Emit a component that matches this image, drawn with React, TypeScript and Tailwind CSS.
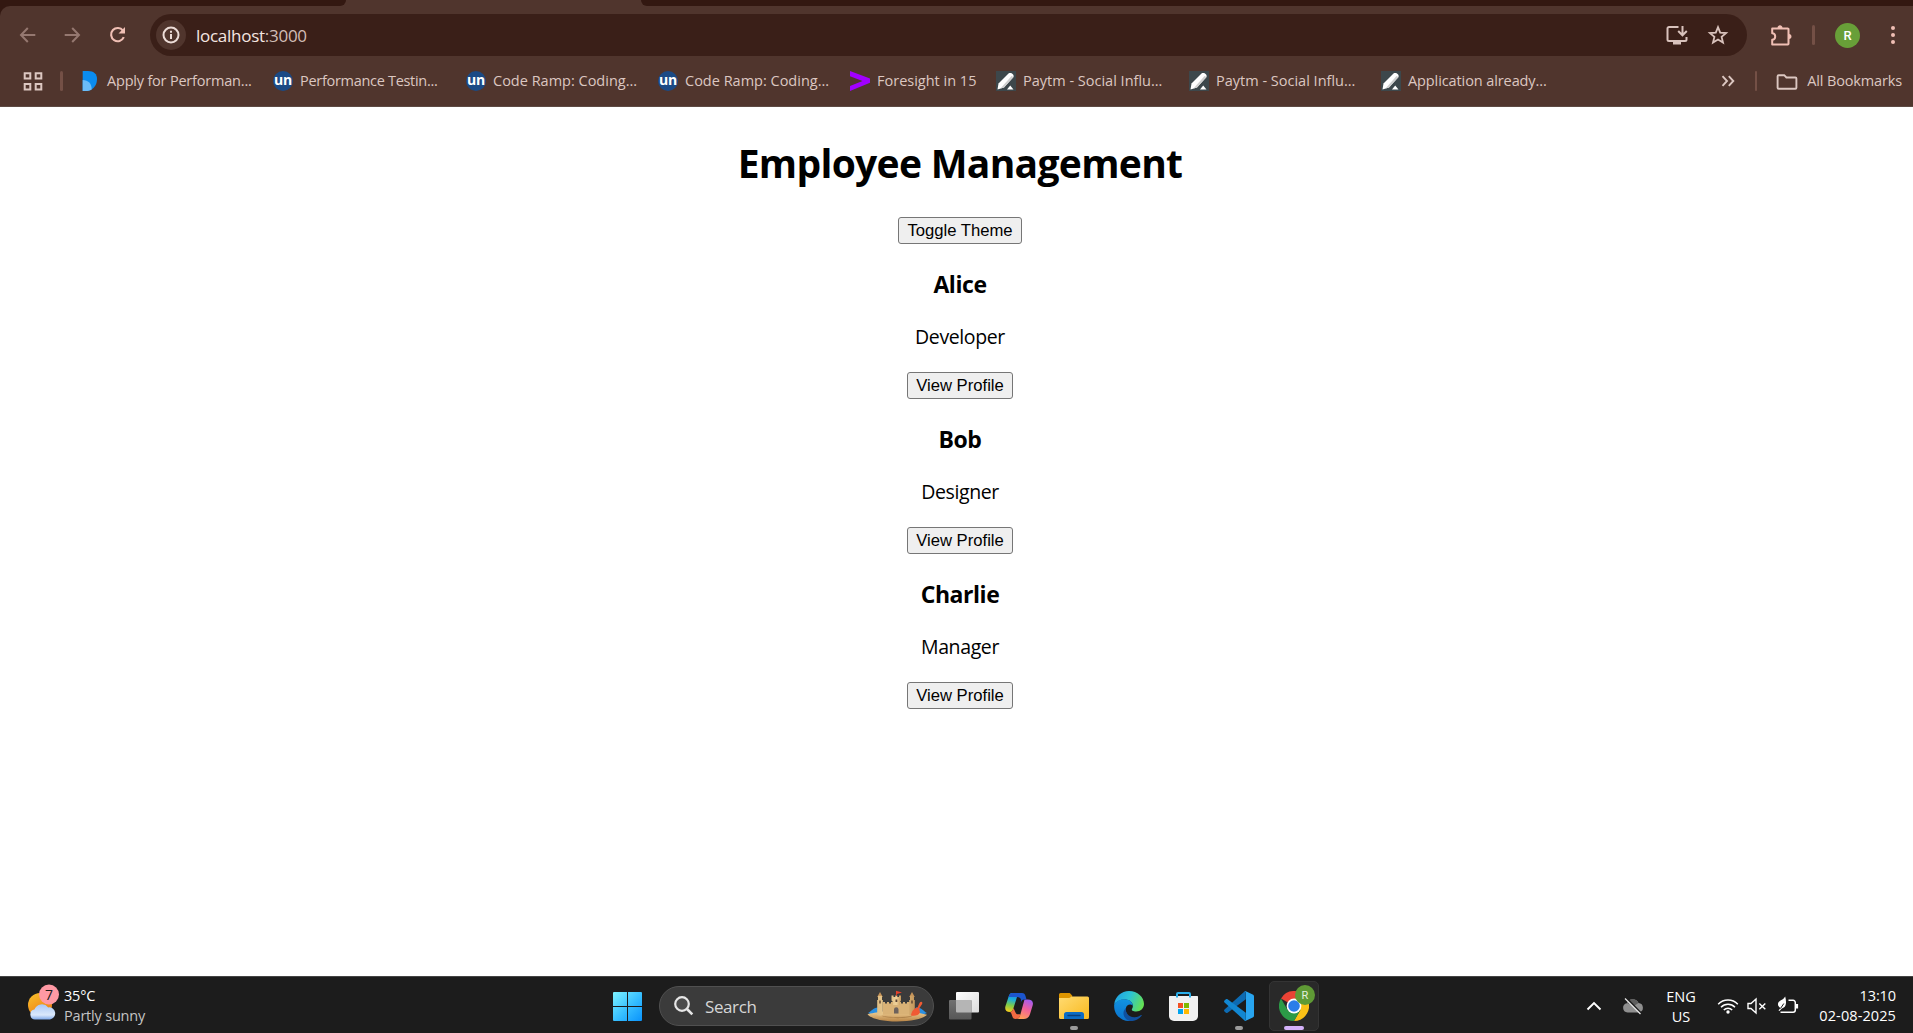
import React from "react";

type Bookmark = { icon: React.ReactNode; label: string; box: string; track: string };

const UnIcon = () => (
  <span className="flex size-5 items-center justify-center rounded-full bg-[#1b4a85] pb-[3px] font-['Open_Sans',sans-serif] text-[14px] leading-none font-bold tracking-[-0.3px] text-white">
    un
  </span>
);

const PromptIcon = () => (
  <svg viewBox="0 0 20 20" className="size-5">
    <path d="M2.700 0H8c6 0 9 3.200 9 8 0 7.500-5 12-11.500 12H2.700z" fill="#0a8cf0" />
    <path d="M2.700 9c5.500 0 9 3.500 9 9.500-2 1-4 1.500-6.200 1.500H2.700z" fill="#6bbcf8" />
  </svg>
);

const ArrowBrandIcon = () => (
  <svg viewBox="0 0 20 20" className="size-5">
    <path d="M0 0l20 7.500v4.200L0 20v-5l12.500-5L0 5.200z" fill="#a100ff" />
  </svg>
);

const PenIcon = () => (
  <svg viewBox="0 0 20 20" className="size-5">
    <path d="M0 0h20v20H0z" fill="#3d474b" />
    <path d="M1.500 18.500l1-6L12.500 2.500c2-1.500 6 .5 5 3.500L8 16.500z" fill="#fff" />
    <path d="M4.500 17.500L15.500 5l2 1L8 16.500z" fill="#cfcfcf" />
    <path d="M11 18.500l3.200-4 3.300 4z" fill="#fff" />
  </svg>
);

const bookmarks: Bookmark[] = [
  { icon: <PromptIcon />, label: "Apply for Performan...", box: "w-[193px]", track: "tracking-[-0.2px]" },
  { icon: <UnIcon />, label: "Performance Testin...", box: "w-[193px]", track: "tracking-[-0.3px]" },
  { icon: <UnIcon />, label: "Code Ramp: Coding...", box: "w-[192px]", track: "tracking-normal" },
  { icon: <UnIcon />, label: "Code Ramp: Coding...", box: "w-[192px]", track: "tracking-normal" },
  { icon: <ArrowBrandIcon />, label: "Foresight in 15", box: "w-[146px]", track: "tracking-normal" },
  { icon: <PenIcon />, label: "Paytm - Social Influ...", box: "w-[193px]", track: "tracking-normal" },
  { icon: <PenIcon />, label: "Paytm - Social Influ...", box: "w-[192px]", track: "tracking-normal" },
  { icon: <PenIcon />, label: "Application already...", box: "w-[192px]", track: "tracking-[-0.1px]" },
];

const employees = [
  { name: "Alice", role: "Developer" },
  { name: "Bob", role: "Designer" },
  { name: "Charlie", role: "Manager" },
];

function TabStrip() {
  return (
    <div className="flex h-1.5 bg-[#50352d]">
      <div className="w-[346px] rounded-br-[10px] bg-[#331811]" />
      <div className="w-[295px]" />
      <div className="flex-1 rounded-bl-[10px] bg-[#331811]" />
    </div>
  );
}

function AddressRow() {
  return (
    <div className="flex h-[58px] items-center">
      <svg viewBox="0 0 20 20" className="ml-[18px] size-5" fill="none" stroke="#957870" strokeWidth="2">
        <path d="M17.300 10H3.500M9.800 3L3 10l6.800 7" />
      </svg>
      <svg viewBox="0 0 20 20" className="ml-[24px] size-5" fill="none" stroke="#957870" strokeWidth="2">
        <path d="M2.700 10h13.800M10.200 3L17 10l-6.800 7" />
      </svg>
      <svg viewBox="0 0 20 20" className="ml-[26px] size-5" fill="none" stroke="#f0bfb4" strokeWidth="2.100">
        <path d="M15.800 12.200A6.600 6.600 0 1 1 15 5.600" />
        <path d="M17 2v6.500h-6.500L13.700 5.300z" fill="#f0bfb4" stroke="none" />
      </svg>
      <div className="ml-[22px] flex h-[42px] w-[1597px] items-center rounded-full bg-[#3a1f18] pl-1.5">
        <div className="flex size-[30px] items-center justify-center rounded-full bg-[#50352d]">
          <svg viewBox="0 0 18 18" className="size-[18px]" fill="none" stroke="#ecdcd7" strokeWidth="2">
            <circle cx="9" cy="9" r="7.500" />
            <path d="M9 8v5M9 4.800v1.900" />
          </svg>
        </div>
        <div className="mt-0.5 ml-[10px] text-[17px] leading-6 tracking-[-0.27px] text-[#f5e6e1]">
          localhost<span className="text-[#d2bdb6]">:3000</span>
        </div>
        <svg viewBox="0 0 24 24" className="mr-[17px] ml-auto size-6" fill="none" stroke="#d9c2bc" strokeWidth="2">
          <path d="M13.500 4H4a1.500 1.500 0 0 0-1.500 1.500v11A1.500 1.500 0 0 0 4 18h16a1.500 1.500 0 0 0 1.500-1.500V14" />
          <path d="M17.500 3v9M13.200 8l4.300 4.300L21.800 8" />
          <path d="M8 19h8v2.500H8z" fill="#d9c2bc" stroke="none" />
        </svg>
        <svg viewBox="0 0 24 24" className="mr-[17px] size-6" fill="none" stroke="#d9c2bc" strokeWidth="1.800">
          <path d="M12 4.200l2.200 5.500 5.900.4-4.500 3.800 1.400 5.700-5-3.100-5 3.100 1.400-5.700-4.500-3.800 5.900-.4z" />
        </svg>
      </div>
      <svg viewBox="0 0 24 24" className="ml-[22px] size-6" fill="none" stroke="#f0bfb4" strokeWidth="2" strokeLinejoin="round">
        <path d="M3.200 5.500h15.600a.7.700 0 0 1 .7.700v14.600a.7.700 0 0 1-.7.700H3.200v-4.700c4-.2 4-6.300 0-6.500z" />
        <path d="M8.500 5c0-3.800 5-3.800 5 0zM20 11c3.300 0 3.300 5 0 5z" fill="#f0bfb4" stroke="none" />
      </svg>
      <div className="ml-[19px] h-5 w-[2.5px] rounded-full bg-[#745046]" />
      <div className="ml-[20.5px] flex size-[25px] items-center justify-center rounded-full bg-[#689f38] font-['Roboto',sans-serif] text-[13px] leading-none font-medium text-white">
        R
      </div>
      <div className="ml-[31px] flex flex-col gap-[3px]">
        <span className="size-1 rounded-full bg-[#f0bfb4]" />
        <span className="size-1 rounded-full bg-[#f0bfb4]" />
        <span className="size-1 rounded-full bg-[#f0bfb4]" />
      </div>
    </div>
  );
}

function BookmarksBar() {
  return (
    <div className="flex h-[42px] items-start pt-[7px] text-[14.5px] leading-5 text-[#dcc7c1]">
      <svg viewBox="0 0 20 20" className="ml-[22.5px] size-5" fill="none" stroke="#dcc7c1" strokeWidth="2">
        <path d="M1.700 2.300h5.600v5.200H1.700zM12.700 2.300h5.600v5.200h-5.600zM1.700 13h5.600v5.400H1.700zM12.700 13h5.600v5.400h-5.600z" />
      </svg>
      <div className="mr-[17.5px] ml-[17.5px] h-5 w-[2.5px] rounded-full bg-[#745046]" />
      {bookmarks.map((b, i) => (
        <div key={i} className={`flex shrink-0 items-center gap-[7px] ${b.box}`}>
          {b.icon}
          <span className={`whitespace-nowrap ${b.track}`}>{b.label}</span>
        </div>
      ))}
      <svg viewBox="0 0 14 14" className="mt-[3px] ml-auto size-[14px]" fill="none" stroke="#dcc7c1" strokeWidth="1.900">
        <path d="M1.500 2.200L6 7l-4.500 4.800M7.800 2.200L12.300 7l-4.500 4.800" />
      </svg>
      <div className="ml-[20px] h-5 w-[2.5px] rounded-full bg-[#745046]" />
      <svg viewBox="0 0 22 18" className="mt-[1.5px] ml-[19px] h-[18px] w-[22px]" fill="none" stroke="#dcc7c1" strokeWidth="1.900">
        <path d="M1.600 14.800V3.200c0-.6.400-1 1-1h5.600l2.200 2.300h9c.6 0 1 .4 1 1v9.300c0 .6-.4 1-1 1H2.600c-.6 0-1-.4-1-1z" />
      </svg>
      <span className="mr-[11px] ml-[9px] tracking-[-0.15px] whitespace-nowrap">All Bookmarks</span>
    </div>
  );
}

const plainButton =
  "h-[27px] rounded-[3px] border border-[#767676] bg-[#efefef] text-center font-['Liberation_Sans',Arial,sans-serif] text-[16.67px] leading-[25px] whitespace-nowrap text-black";

function Page() {
  return (
    <main className="flex flex-1 flex-col items-center bg-white pt-[29px] pl-[7px] text-black">
      <h1 className="h-[54px] text-[39px] leading-[54px] font-bold tracking-[-0.69px]">Employee Management</h1>
      <button className={`mt-[27px] w-[124px] ${plainButton}`}>Toggle Theme</button>
      {employees.map((e) => (
        <section key={e.name} className="flex flex-col items-center">
          <h3 className="mt-6 text-[23px] leading-8 font-bold tracking-[-0.45px]">{e.name}</h3>
          <p className="mt-[23px] text-[19.5px] leading-7 tracking-[-0.38px]">{e.role}</p>
          <button className={`mt-[21px] w-[106px] ${plainButton}`}>View Profile</button>
        </section>
      ))}
    </main>
  );
}

const Weather = () => (
  <svg viewBox="0 0 36 36" className="h-9 w-9">
    <defs>
      <linearGradient id="sun" x1="0" y1="0" x2="0.600" y2="1">
        <stop offset="0" stopColor="#f8c22c" />
        <stop offset="1" stopColor="#ee7c14" />
      </linearGradient>
      <linearGradient id="cloud" x1="0" y1="0" x2="0" y2="1">
        <stop offset="0" stopColor="#a9c8f5" />
        <stop offset="0.700" stopColor="#dbe8fb" />
        <stop offset="1" stopColor="#7fa9ea" />
      </linearGradient>
    </defs>
    <circle cx="14" cy="21" r="12" fill="url(#sun)" />
    <path d="M9 35.500a5 5 0 0 1-.6-9.900 8 8 0 0 1 13.800-2.200 6 6 0 0 1 1.800 12.100z" fill="url(#cloud)" />
    <circle cx="23" cy="10.500" r="10" fill="#ff99a4" />
  </svg>
);

const Castle = () => (
  <svg viewBox="0 0 60 32" className="h-8 w-[60px]">
    <defs>
      <linearGradient id="sand" x1="0" y1="0" x2="1" y2="0">
        <stop offset="0" stopColor="#e0bf84" />
        <stop offset="0.500" stopColor="#f0d29a" />
        <stop offset="1" stopColor="#c4975a" />
      </linearGradient>
      <linearGradient id="beach" x1="0" y1="0" x2="0" y2="1">
        <stop offset="0" stopColor="#f0cf93" />
        <stop offset="1" stopColor="#b98547" />
      </linearGradient>
    </defs>
    <path d="M1 23c3-1 5-6 11-5.500l3 6L6 25z" fill="#2b8fe0" />
    <path d="M60 23c-3-1-5-6-11-5.500l-3 6 9 1.500z" fill="#2b8fe0" />
    <path d="M.5 24.200C8 22.500 12 22 16 21.500h27c5 .5 11 2 17 3.300-2 3-14 6.700-30 6.700S3 28 .5 24.200z" fill="url(#beach)" />
    <path d="M14 25.500c8 2.300 24 2.300 32 0-4 3.500-26 3.500-32 0z" fill="#8a5f30" opacity=".55" />
    <path d="M10.200 7L13 2l2.800 5zM42.200 7L45 2l2.800 5z" fill="#c7955a" />
    <path d="M16 12h2v1.500h2V12h2v1.500h2V12h10v1.500h2V12h2v1.500h2V12h3v12.500H16z" fill="#d9b276" />
    <path d="M24.500 5.500h2V7h1.800V5.500h2V7h1.700V5.500h2v5L33 12v3h-7v-3l-1.500-1.500z" fill="url(#sand)" />
    <path d="M11 6h4v4h.8v15c-1.800.8-3.800.8-5.600 0V10h.8zM43 6h4v4h.8v15c-1.800.8-3.800.8-5.600 0V10h.8z" fill="url(#sand)" />
    <path d="M27 23.500v-3.800c0-3.300 4.500-3.300 4.500 0v3.800z" fill="#6d625c" />
    <path d="M12.300 10.500h1.400v3h-1.400zM44.300 10.500h1.400v3h-1.400zM28.500 9.500h1.800v2.500h-1.800z" fill="#5a4332" />
    <path d="M29 6V.800l6 1.700-5.200 1.600V6z" fill="#e8412a" />
    <path d="M50.500 17.500l2-4.500c1.500-2.500 4-1 2.300 1.500l-2.500 3.800.7 4.200c-1.500 3.500-5.500 3.500-9 3 .5-4 3-7.500 6.500-8z" fill="#f05a33" />
  </svg>
);

const StartLogo = () => (
  <svg viewBox="0 0 29 29" className="size-[29px]">
    <defs>
      <linearGradient id="win" x1="0" y1="0" x2="1" y2="1">
        <stop offset="0" stopColor="#7df3ff" />
        <stop offset="0.550" stopColor="#35bdff" />
        <stop offset="1" stopColor="#0a93fb" />
      </linearGradient>
    </defs>
    <path d="M1 0h13v14H0V1a1 1 0 0 1 1-1zM15 0h13a1 1 0 0 1 1 1v13H15zM0 15h14v14H1a1 1 0 0 1-1-1zM15 15h14v13a1 1 0 0 1-1 1H15z" fill="url(#win)" />
  </svg>
);

const TaskView = () => (
  <svg viewBox="0 0 30 30" className="size-[30px]">
    <defs>
      <linearGradient id="tv1" x1="0" y1="0" x2="1" y2="1">
        <stop offset="0" stopColor="#fff" />
        <stop offset="1" stopColor="#dcdcdc" />
      </linearGradient>
      <linearGradient id="tv2" x1="0" y1="0" x2="0" y2="1">
        <stop offset="0" stopColor="#717171" />
        <stop offset="1" stopColor="#575757" />
      </linearGradient>
    </defs>
    <rect x="7" y="1" width="23" height="20.500" rx="1" fill="url(#tv1)" />
    <rect x="0" y="9" width="22.500" height="19.500" rx="1" fill="url(#tv2)" />
    <path d="M7 9h15.500v12.500H8a1 1 0 0 1-1-1z" fill="#b5b5b5" />
  </svg>
);

const Copilot = () => (
  <svg viewBox="0 0 30 30" className="size-[30px]">
    <defs>
      <linearGradient id="cp1" x1="0.500" y1="0" x2="0.300" y2="1">
        <stop offset="0" stopColor="#1a7fe8" />
        <stop offset="0.350" stopColor="#1fb0d8" />
        <stop offset="0.650" stopColor="#7ccb4c" />
        <stop offset="1" stopColor="#f5cf1c" />
      </linearGradient>
      <linearGradient id="cp2" x1="0.700" y1="0" x2="0.300" y2="1">
        <stop offset="0" stopColor="#a45cf0" />
        <stop offset="0.450" stopColor="#f0609c" />
        <stop offset="1" stopColor="#ffa153" />
      </linearGradient>
    </defs>
    <path d="M20.500 8.500h3.200c4 0 6 2.200 5 5.800l-2.500 8.200c-1.200 4-3 5.500-6.500 5.500h-8c2.700 0 3.800-1.500 4.600-4.200z" fill="url(#cp2)" />
    <path d="M8 2h9c-2.200.3-3.300 1.500-4 4L9.500 17c-.8 2.500-1.600 4-3.500 4-4 0-5.500-2.300-4.500-6L4 7.500C5.100 3.800 6 2 8 2z" fill="url(#cp1)" />
    <path d="M8.500 2H18c2 0 3 1.200 3.500 3l1 3.500h-2.200c-2 0-2.800 1-3.500 3.300l.2-3c-.5-2-1.600-2.800-4-2.800H4.600C5.600 3 6.500 2 8.500 2z" fill="#1c55cf" />
    <path d="M5.500 21c2.400 0 3.300-1.300 4-4l2 4.500c.6 1.500 1.500 1.800 2.700 1.800h2.300c-.8 3.300-2 4.700-4.800 4.700-2.200 0-3-1.200-3.500-3-.7-2.300-1-4-2.700-4z" fill="#f26a42" />
  </svg>
);

const Folder = () => (
  <svg viewBox="0 0 30 30" className="size-[30px]">
    <defs>
      <linearGradient id="fd" x1="0" y1="0" x2="1" y2="1">
        <stop offset="0" stopColor="#ffdb72" />
        <stop offset="1" stopColor="#f9b91e" />
      </linearGradient>
    </defs>
    <path d="M0 3.500A1.500 1.500 0 0 1 1.500 2h8.300c1 0 1.600.4 2.200 1.200L13.500 5l-3 4H0z" fill="#dd9500" />
    <path d="M0 7h9.500c1 0 1.600-.3 2.300-1l.6-.6h16.100A1.500 1.500 0 0 1 30 6.900v19.600a1.500 1.500 0 0 1-1.500 1.500h-27A1.500 1.500 0 0 1 0 26.500z" fill="url(#fd)" />
    <path d="M5 28v-4.500A2.500 2.500 0 0 1 7.500 21h15a2.500 2.500 0 0 1 2.500 2.500V28z" fill="#0b6cc4" />
    <path d="M9 24.500h12" stroke="#083f7c" strokeWidth="1.400" strokeLinecap="round" />
  </svg>
);

const Edge = () => (
  <svg viewBox="0 0 30 30" className="size-[30px]">
    <defs>
      <linearGradient id="eg1" x1="0" y1="0.200" x2="1" y2="0.500">
        <stop offset="0" stopColor="#1f9fe4" />
        <stop offset="0.500" stopColor="#2cc4d4" />
        <stop offset="1" stopColor="#64e055" />
      </linearGradient>
      <linearGradient id="eg2" x1="0.400" y1="0" x2="0.300" y2="1">
        <stop offset="0" stopColor="#1193e2" />
        <stop offset="1" stopColor="#0b72cc" />
      </linearGradient>
    </defs>
    <path d="M.2 13.500C1 5.500 7.500 0 15 0c8.500 0 15 6 15 13 0 4.500-3.500 7.500-7.800 7.500-3.200 0-5-1-4.200-2.500 3-4.500-1.500-9.500-7-9.500-5 0-8.800 2-10.800 5z" fill="url(#eg1)" />
    <path d="M.2 13.500C2.200 10 6 8.200 10.500 8.200c4.500 0 8.300 2.800 8.300 6.500-2-2.300-6.500-1.200-7 2.800-.6 5 3.200 10.500 9.500 10.800-2 1.100-4 1.700-6.300 1.700C6.500 30-.6 23 .2 13.500z" fill="url(#eg2)" />
    <path d="M12 17c-1 6 4 9.500 9 9.200 2.500-.2 4.500-1.200 6-2.200.6-.3 1 .1.600.7C24.800 28.300 20 30.500 16 30c-6-1-9-9-4-13z" fill="#10509e" />
  </svg>
);

const Store = () => (
  <svg viewBox="0.500 0 30 30" className="size-[30px]">
    <path d="M.5 6c0-.6.400-1 1-1h27c.6 0 1 .4 1 1v19a5 5 0 0 1-5 5h-19a5 5 0 0 1-5-5z" fill="#f1f1f1" />
    <path d="M8.500 6.500V3c0-.600.400-1 1-1h11c.6 0 1 .4 1 1v3.500" fill="none" stroke="#2aaeea" strokeWidth="2" />
    <path d="M9.500 12h5v5h-5z" fill="#f25022" />
    <path d="M15.500 12h5v5h-5z" fill="#7fba00" />
    <path d="M9.500 18h5v5h-5z" fill="#00a4ef" />
    <path d="M15.500 18h5v5h-5z" fill="#ffb900" />
  </svg>
);

const Code = () => (
  <svg viewBox="0 0 30 30" className="size-[30px]">
    <path d="M21.800 8.200L3.600 21.800c-.6.400-1.200.4-1.700 0L.5 20.400c-.6-.5-.6-1.300 0-1.800L20.500.6c.6-.5 1.200-.6 1.300-.5z" fill="#0d6bb3" />
    <path d="M21.800 21.800L3.600 8.200c-.6-.4-1.200-.4-1.700 0L.5 9.600c-.6.500-.6 1.300 0 1.800l20 18c.6.500 1.200.6 1.300.5z" fill="#1287d2" />
    <path d="M21.800 29.800c-.7.300-1.500.1-2-.5.8.8 2.200.2 2.200-.9V1.600c0-1.100-1.400-1.700-2.200-.9.500-.6 1.300-.8 2-.5l6.900 3.200c.8.400 1.300 1.100 1.300 2v19.200c0 .9-.5 1.600-1.300 2z" fill="#28a5f0" />
  </svg>
);

const Chrome = () => (
  <svg viewBox="0 0 30 30" className="size-[30px]">
    <path d="M15 15L2 7.500A15 15 0 0 1 28 7.500H15z" fill="#ea4335" />
    <path d="M15 15V7.500h13A15 15 0 0 1 15 30l6.500-11.200z" fill="#fbc116" />
    <path d="M2 7.500l6.500 11.300c2 3.500 8 5 13 0L15 30A15 15 0 0 1 2 7.500z" fill="#2c9a47" />
    <circle cx="15" cy="15" r="7.400" fill="#fff" />
    <circle cx="15" cy="15" r="5.800" fill="#2a7de9" />
  </svg>
);

const apps = [
  { icon: <TaskView />, running: false },
  { icon: <Copilot />, running: false },
  { icon: <Folder />, running: true },
  { icon: <Edge />, running: false },
  { icon: <Store />, running: false },
  { icon: <Code />, running: true },
];

function Taskbar() {
  return (
    <footer className="flex h-[57px] shrink-0 items-start border-t border-[#444] bg-[#1c1c1c] text-[14.5px] leading-5 text-white">
      <div className="flex w-[613px] pl-[26px]">
        <div className="relative mt-[7px]">
          <Weather />
          <span className="absolute top-[1px] left-[18px] w-[10px] text-center text-[14px] leading-[19px] text-[#1c1c1c]">7</span>
        </div>
        <div className="mt-[9px] ml-[2px] tracking-[-0.2px]">
          <div>35°C</div>
          <div className="text-[#c4c4c4]">Partly sunny</div>
        </div>
      </div>
      <div className="mt-[15px]">
        <StartLogo />
      </div>
      <div className="mt-[9px] ml-[17px] flex h-10 w-[275px] items-center rounded-full border border-[#505050] bg-[#3b3b3b] pr-[6px] pl-[14px]">
        <svg viewBox="0 0 20 20" className="size-5" fill="none" stroke="#e6e6e6" strokeWidth="2.200">
          <circle cx="8" cy="8" r="6.800" fill="#4c4c4c" />
          <path d="M13 13l5.300 5.300" strokeWidth="2.600" />
        </svg>
        <span className="mt-0.5 ml-[11px] text-[17px] leading-6 tracking-[-0.4px] text-[#d6d6d6]">Search</span>
        <div className="ml-auto">
          <Castle />
        </div>
      </div>
      <div className="ml-[2.5px] flex">
        {apps.map((a, i) => (
          <div key={i} className="flex w-[55px] flex-col items-center pt-[14px]">
            {a.icon}
            {a.running && <div className="mt-[5px] h-1 w-2 rounded-full bg-[#9b9b9b]" />}
          </div>
        ))}
        <div className="relative mt-1 ml-[2.5px] flex h-[50px] w-[50px] flex-col items-center rounded-[5px] border border-[#343434] bg-[#292929] pt-[9px]">
          <Chrome />
          <div className="mt-[5px] h-1 w-5 rounded-full bg-[#d5b2fb]" />
          <span className="absolute top-[3px] left-[25px] flex size-5 items-center justify-center rounded-full bg-[#5f9a35] font-['Roboto',sans-serif] text-[11px] leading-none text-[#e4eedd]">
            R
          </span>
        </div>
      </div>
      <div className="ml-auto flex">
        <svg viewBox="0 0 16 10" className="mt-[24px] h-[10px] w-4" fill="none" stroke="#fff" strokeWidth="1.900">
          <path d="M1.500 8.500L8 2l6.500 6.500" />
        </svg>
        <svg viewBox="0 0 22 18" className="mt-5 ml-[20px] h-[18px] w-[22px]">
          <path d="M5.500 15.500a4.700 4.700 0 0 1-.6-9.300A6.300 6.300 0 0 1 16.500 6a4.800 4.800 0 0 1 .5 9.500z" fill="#8f8f8f" />
          <path d="M5 6.200A6.300 6.300 0 0 1 16.500 6l-4.500 3z" fill="#5e5e5e" />
          <path d="M4.200 1l15 15.500" stroke="#1c1c1c" strokeWidth="2" />
          <path d="M3 1.500l15.500 15.500" stroke="#e8e8e8" strokeWidth="1.300" />
        </svg>
        <div className="mt-[10px] ml-[22px] w-[30px] text-center">
          <div>ENG</div>
          <div>US</div>
        </div>
        <svg viewBox="0 0 22 18" className="mt-5 ml-[21px] h-[18px] w-[22px]" fill="none" stroke="#fff" strokeWidth="1.500">
          <path d="M1.200 7.200a13.500 13.500 0 0 1 19.600 0" />
          <path d="M4 10.200a9.700 9.700 0 0 1 14 0" />
          <path d="M6.800 13a6 6 0 0 1 8.400 0" />
          <circle cx="11" cy="15" r="1.700" fill="#fff" stroke="none" />
        </svg>
        <svg viewBox="0 0 20 18" className="mt-5 ml-[8px] h-[18px] w-5" fill="none" stroke="#fff" strokeWidth="1.400">
          <path d="M1 6.500h3L9 2v14l-5-4.500H1zM12.300 6.500l6 5.800M18.300 6.500l-6 5.800" />
        </svg>
        <svg viewBox="0 0 22 18" className="mt-[19px] ml-[10px] h-[18px] w-[22px]" fill="none" stroke="#fff" strokeWidth="1.500">
          <path d="M11.500 4.300h4.600a2.200 2.200 0 0 1 2.200 2.200v7.500a2.200 2.200 0 0 1-2.200 2.200H3.500" />
          <path d="M20 8v4.500" strokeWidth="2.200" />
          <path d="M1.500 14.500l2-2.500C-.3 10 .6 6 3.500 4.500 5.500 3.500 7 2.500 8.200.5c1.300 5 1.600 11-3.400 12L2.500 15z" fill="#fff" stroke="none" />
          <path d="M3.500 12.500l3.300-5" stroke="#1c1c1c" strokeWidth="1" />
        </svg>
        <div className="mt-[9px] mr-[17px] ml-[19px] w-[78px] text-right tracking-[0.1px]">
          <div className="tracking-[-0.1px]">13:10</div>
          <div className="whitespace-nowrap">02-08-2025</div>
        </div>
      </div>
    </footer>
  );
}

export default function App() {
  return (
    <div className="flex h-[1033px] w-[1913px] flex-col overflow-hidden font-['Open_Sans','Noto_Sans',sans-serif]">
      <header className="h-[107px] shrink-0 border-b border-[#5d4a43] bg-[#331811]">
        <TabStrip />
        <div className="rounded-tl-[10px] bg-[#50352d]">
          <AddressRow />
          <BookmarksBar />
        </div>
      </header>
      <Page />
      <Taskbar />
    </div>
  );
}
